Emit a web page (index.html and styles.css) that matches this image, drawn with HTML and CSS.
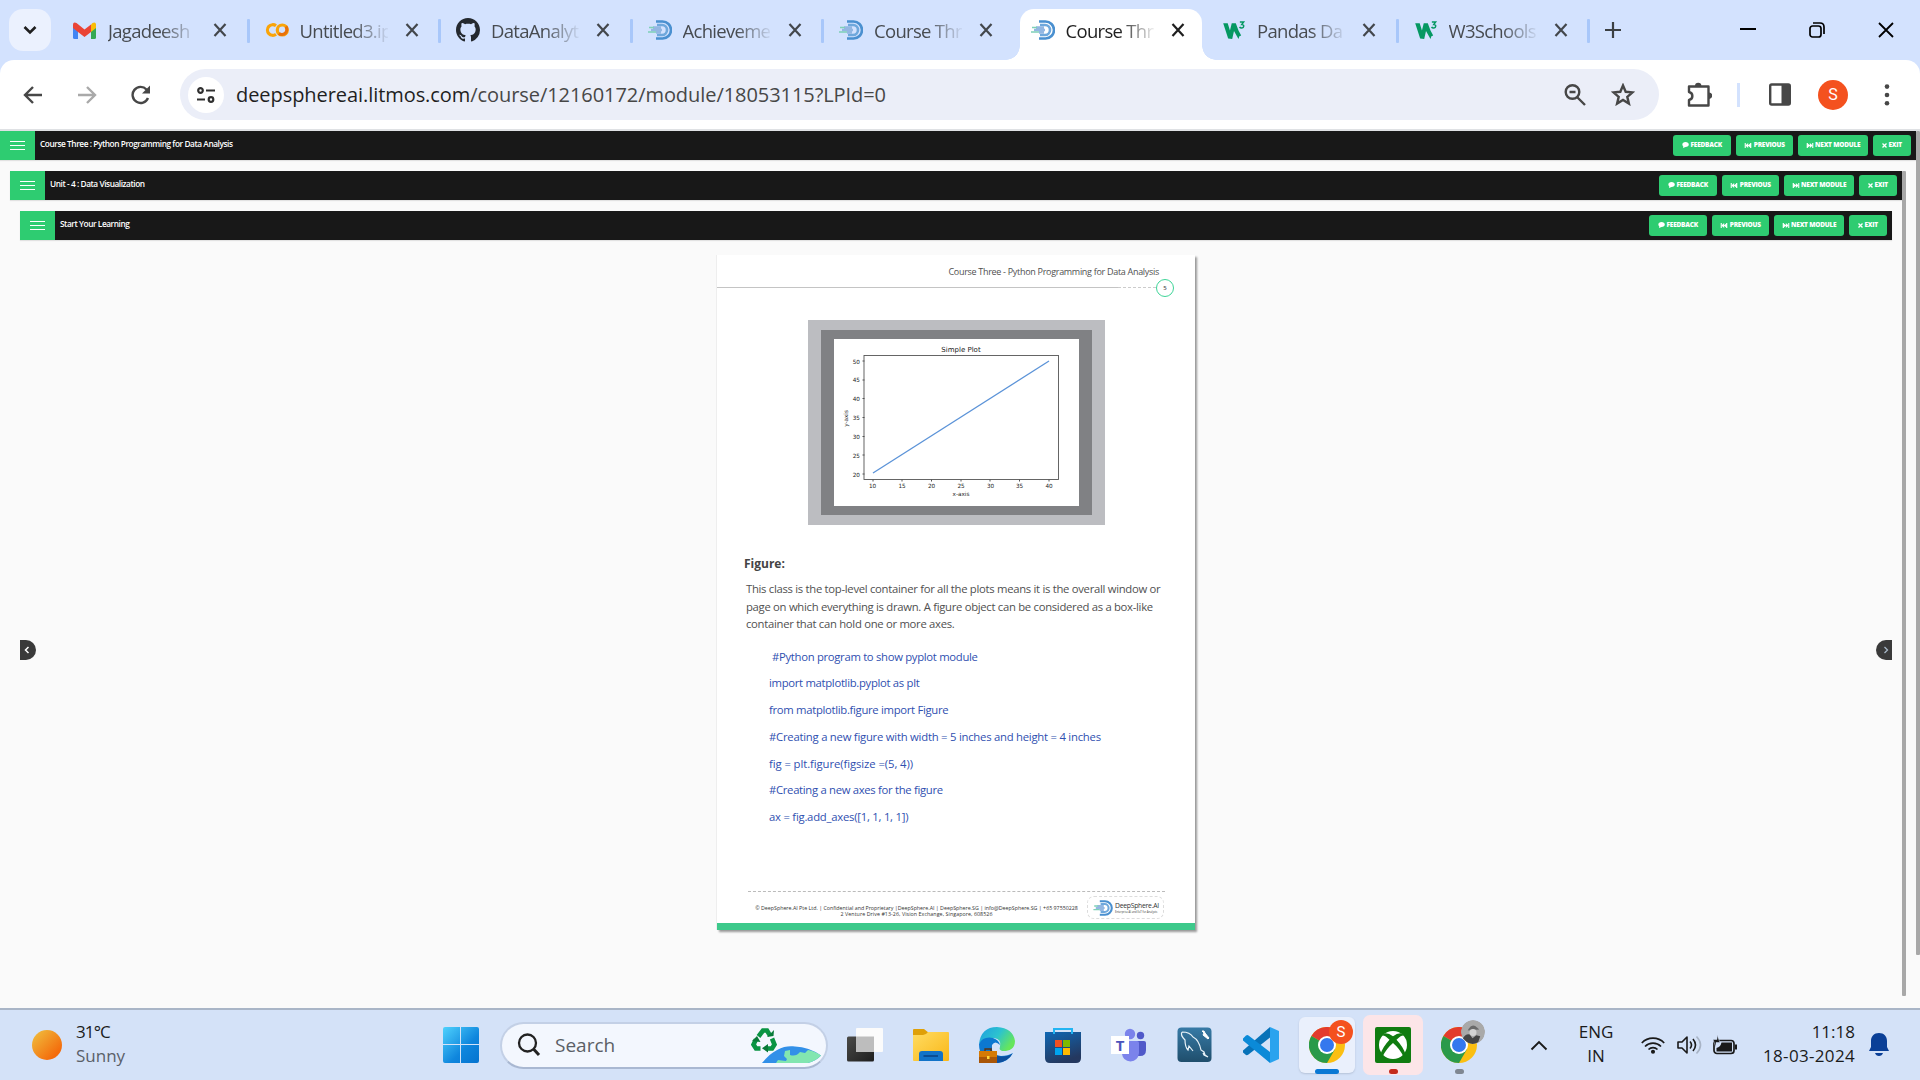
FILE: index.html
```html
<!DOCTYPE html>
<html lang="en">
<head>
<meta charset="utf-8">
<title>Course Three</title>
<link rel="stylesheet" href="styles.css">
</head>
<body>
<svg class="defs" width="0" height="0">
  <defs>
    <linearGradient id="sun" x1="0" y1="0" x2="1" y2="1"><stop offset="0.1" stop-color="#f0b83a"/><stop offset="0.8" stop-color="#f46c0c"/></linearGradient>
    <linearGradient id="win" x1="0" y1="0" x2="1" y2="1"><stop offset="0" stop-color="#4fd2fd"/><stop offset="0.6" stop-color="#0f86dd"/><stop offset="1" stop-color="#0573cf"/></linearGradient>
    <linearGradient id="fold" x1="0" y1="0" x2="1" y2="1"><stop offset="0" stop-color="#ffdc62"/><stop offset="1" stop-color="#f9b718"/></linearGradient>
    <linearGradient id="edgeTop" x1="0" y1="0" x2="1" y2="0.5"><stop offset="0" stop-color="#1e9de0"/><stop offset="0.55" stop-color="#2cc3cf"/><stop offset="1" stop-color="#66e65b"/></linearGradient>
    <linearGradient id="store" x1="0" y1="0" x2="0.4" y2="1"><stop offset="0" stop-color="#0f67b4"/><stop offset="1" stop-color="#24385f"/></linearGradient>
    <linearGradient id="sql" x1="0" y1="0" x2="0" y2="1"><stop offset="0" stop-color="#377aa6"/><stop offset="1" stop-color="#1f4e6c"/></linearGradient>
    <linearGradient id="dark" x1="0" y1="0" x2="1" y2="1"><stop offset="0" stop-color="#4a4a48"/><stop offset="1" stop-color="#1e1e1e"/></linearGradient>
  </defs>
  <symbol id="x" viewBox="0 0 14 14"><path d="M1.500 1l11 12M12.500 1l-11 12" fill="none" stroke="currentColor" stroke-width="2.200"/></symbol>
  <symbol id="ds" viewBox="0 0 24 20">
    <path d="M8 1.500h6.500a8.500 8.500 0 0 1 0 17H8" fill="none" stroke="#4a90d0" stroke-width="2.600"/>
    <path d="M9 5h5a5 5 0 0 1 0 10H9" fill="none" stroke="#6fa8dc" stroke-width="2.600"/>
    <path d="M5 7.500h8M3 10h11M8 12.500h5" stroke="#93b7e2" stroke-width="2.600"/>
    <path d="M1 7.500h5M0 12h8" stroke="#7ed0b8" stroke-width="1.600"/>
  </symbol>
  <symbol id="w3" viewBox="0 0 24 20">
    <path d="M0 2.500h5l2.500 8 2-8h4.500l3 8 3 5.500-2 1-1 3-5-9-2 9-4.500-.5z" fill="#059862"/>
    <path d="M18.500 1h4.200l-2 2.800c3 0 2.600 4.200-.2 4-1.100 0-1.900-.5-2.300-1.300" fill="none" stroke="#059862" stroke-width="1.700"/>
  </symbol>
  <symbol id="chrome" viewBox="0 0 36 36">
    <circle cx="18" cy="18" r="18" fill="#fbbf12"/>
    <path d="M18 18L2.400 9A18 18 0 0 1 33.600 9z" fill="#e33b2e"/>
    <path d="M2.400 9A18 18 0 0 0 18 36l7.800-13.500L18 18z" fill="#2a9a4a"/>
    <circle cx="18" cy="18" r="9" fill="#fff"/>
    <circle cx="18" cy="18" r="7" fill="#3478ee"/>
  </symbol>
  <symbol id="chat" viewBox="0 0 7 6"><path d="M3.500 0C5.500 0 6.800 1 6.800 2.500S5.500 5 3.500 5L1 6l.3-1.600C-.8 2.500.8 0 3.500 0z" fill="#fff"/></symbol>
  <symbol id="prev" viewBox="0 0 8 6"><path d="M.7 0v6M7.300 0v6" stroke="#fff" stroke-width="1.300"/><path d="M4.200 0v6L.8 3zM7.400 0v6L3.800 3z" fill="#fff"/></symbol>
  <symbol id="next" viewBox="0 0 8 6"><path d="M.7 0v6M7.300 0v6" stroke="#fff" stroke-width="1.300"/><path d="M.6 0v6L4.200 3zM3.800 0v6L7.200 3z" fill="#fff"/></symbol>
  <symbol id="times" viewBox="0 0 5 5"><path d="M.5.5l4 4M4.500.5l-4 4" stroke="#fff" stroke-width="1.300"/></symbol>
</svg>

<header class="tabs">
  <button class="tab-search"><svg width="14" height="10" viewBox="0 0 14 10"><path d="M1.500 2l5.500 5.500L12.500 2" fill="none" stroke="#1f1f1f" stroke-width="2.600"/></svg></button>
  <div class="tab"><span class="fav"><svg width="23" height="17" viewBox="0 0 23 17"><path d="M0 2v13.500Q0 17 1.500 17H5V6z" fill="#4285f4"/><path d="M23 2v13.500q0 1.500-1.500 1.500H18V6z" fill="#34a853"/><path d="M18 2.500l1.500-1.500Q23-.5 23 3v3l-5 4z" fill="#fbbc04"/><path d="M5 10L0 6V3Q0-.5 3.500 1L11.500 7.500 18 2.500V10l-6.500 5z" fill="#ea4335"/></svg></span><span class="name">Jagadeesh</span><svg class="x"><use href="#x"/></svg></div>
  <div class="tab"><span class="fav"><svg width="24" height="14" viewBox="0 0 24 14"><path d="M11 2.800A5.300 5.300 0 1 0 11 11.200" fill="none" stroke="#f9a409" stroke-width="3.200"/><circle cx="17.300" cy="7" r="5" fill="none" stroke="#f9a409" stroke-width="3.200"/><path d="M13.800 10.500A5 5 0 0 0 20.800 3.500" fill="none" stroke="#e8710a" stroke-width="3.200"/></svg></span><span class="name">Untitled3.ip</span><svg class="x"><use href="#x"/></svg></div>
  <div class="tab"><span class="fav"><svg width="24" height="24" viewBox="0 0 16 16"><path fill="#24292f" d="M8 0C3.580 0 0 3.580 0 8c0 3.540 2.290 6.530 5.470 7.590.4.070.55-.17.55-.38 0-.19-.01-.82-.01-1.490-2.010.37-2.530-.49-2.690-.94-.09-.23-.48-.94-.82-1.130-.28-.15-.68-.52-.01-.53.63-.01 1.080.58 1.230.82.720 1.210 1.870.87 2.330.66.070-.52.28-.87.51-1.070-1.780-.2-3.640-.89-3.640-3.950 0-.87.31-1.590.82-2.150-.08-.2-.36-1.020.08-2.120 0 0 .67-.21 2.200.82.640-.18 1.320-.27 2-.27s1.360.09 2 .27c1.530-1.040 2.200-.82 2.200-.82.440 1.100.16 1.920.08 2.120.51.560.82 1.270.82 2.150 0 3.070-1.870 3.750-3.650 3.950.29.250.54.730.54 1.480 0 1.070-.01 1.930-.01 2.200 0 .21.15.46.55.38A8.010 8.010 0 0 0 16 8c0-4.420-3.580-8-8-8z"/></svg></span><span class="name">DataAnalyt</span><svg class="x"><use href="#x"/></svg></div>
  <div class="tab"><span class="fav"><svg width="24" height="20"><use href="#ds"/></svg></span><span class="name">Achieveme</span><svg class="x"><use href="#x"/></svg></div>
  <div class="tab last"><span class="fav"><svg width="24" height="20"><use href="#ds"/></svg></span><span class="name">Course Thr</span><svg class="x"><use href="#x"/></svg></div>
  <div class="tab active"><span class="fav"><svg width="24" height="20"><use href="#ds"/></svg></span><span class="name">Course Thr</span><svg class="x"><use href="#x"/></svg></div>
  <div class="tab"><span class="fav"><svg width="24" height="18"><use href="#w3"/></svg></span><span class="name">Pandas Da</span><svg class="x"><use href="#x"/></svg></div>
  <div class="tab"><span class="fav"><svg width="24" height="18"><use href="#w3"/></svg></span><span class="name">W3Schools</span><svg class="x"><use href="#x"/></svg></div>
  <svg class="plus" width="16" height="16" viewBox="0 0 16 16"><path d="M8 0v16M0 8h16" stroke="#3c4043" stroke-width="2.200"/></svg>
  <div class="win-ctl">
    <svg width="16" height="16"><path d="M0 7h16" stroke="#000" stroke-width="2"/></svg>
    <svg width="16" height="16" viewBox="0 0 16 16"><rect x="1" y="4" width="11" height="11" rx="2.500" fill="none" stroke="#000" stroke-width="1.700"/><path d="M4 1h7q4 0 4 4v7" fill="none" stroke="#000" stroke-width="1.700"/></svg>
    <svg width="16" height="16" viewBox="0 0 16 16"><path d="M1 1l14 14M15 1L1 15" stroke="#000" stroke-width="1.800"/></svg>
  </div>
</header>

<div class="toolbar">
  <svg class="back" width="20" height="20" viewBox="0 0 20 20"><path d="M19 10H3M10 2L2 10l8 8" fill="none" stroke="#474747" stroke-width="2.400"/></svg>
  <svg class="fwd" width="20" height="20" viewBox="0 0 20 20"><path d="M1 10h16M10 2l8 8-8 8" fill="none" stroke="#a9a9a9" stroke-width="2.400"/></svg>
  <svg class="reload" width="20" height="20" viewBox="0 0 20 20"><path d="M17 13A8 8 0 1 1 15.500 4.500L18 7" fill="none" stroke="#474747" stroke-width="2.400"/><path d="M19 .5V8.500H11z" fill="#474747"/></svg>
  <div class="omnibox">
    <span class="site"><svg width="18" height="18" viewBox="0 0 18 18" fill="none" stroke="#303030" stroke-width="2.200"><circle cx="3.500" cy="4.500" r="2.300"/><path d="M9 4.500h9M0 13.500h8"/><circle cx="14" cy="13.500" r="2.300"/></svg></span>
    <span class="url"><b>deepsphereai.litmos.com</b>/course/12160172/module/18053115?LPId=0</span>
    <svg class="mag" width="22" height="22" viewBox="0 0 22 22" fill="none" stroke="#474747" stroke-width="2.400"><circle cx="8.500" cy="8" r="6.800"/><path d="M13.500 13.500l7.500 7.500M5.500 8h6"/></svg>
    <svg class="star" width="24" height="23" viewBox="0 0 24 23"><path d="M12 2.500l2.700 6.300 6.800.6-5.200 4.500 1.600 6.700L12 17l-5.900 3.600 1.600-6.700-5.200-4.500 6.800-.6z" fill="none" stroke="#474747" stroke-width="2.400"/></svg>
  </div>
  <svg class="puz" width="25" height="26" viewBox="0 0 25 26"><path d="M2 4.500h19.500v19H2v-5.500c4.500-1 4.500-7 0-8z" fill="none" stroke="#474747" stroke-width="2.400" stroke-linejoin="round"/><path d="M8 4a3.200 3.200 0 0 1 6.400 0zM22 10.500a3.200 3.200 0 0 1 0 6.400z" fill="#474747"/></svg>
  <i class="tsep"></i>
  <svg class="panel" width="22" height="23" viewBox="0 0 22 23"><rect x="1.200" y="1.500" width="19.600" height="20" rx="1.500" fill="none" stroke="#474747" stroke-width="2.400"/><path d="M12.500 2h8v19h-8z" fill="#474747"/></svg>
  <span class="avatar">S</span>
  <svg class="dots" width="6" height="22" viewBox="0 0 6 22" fill="#474747"><circle cx="3" cy="2.600" r="2.300"/><circle cx="3" cy="11" r="2.300"/><circle cx="3" cy="19.300" r="2.300"/></svg>
</div>

<main class="page">
  <section class="frame f1">
    <div class="bar"><span class="menu"><i></i><i></i><i></i></span><h1>Course Three : Python Programming for Data Analysis</h1>
      <nav><a class="b1"><svg width="7" height="6"><use href="#chat"/></svg><i>FEEDBACK</i></a><a class="b2"><svg width="8" height="5"><use href="#prev"/></svg><i>PREVIOUS</i></a><a class="b3"><svg width="8" height="5"><use href="#next"/></svg><i>NEXT MODULE</i></a><a class="b4"><svg width="5" height="5"><use href="#times"/></svg><i>EXIT</i></a></nav></div>
    <section class="frame f2">
      <div class="bar"><span class="menu"><i></i><i></i><i></i></span><h1>Unit - 4 : Data Visualization</h1>
        <nav><a class="b1"><svg width="7" height="6"><use href="#chat"/></svg><i>FEEDBACK</i></a><a class="b2"><svg width="8" height="5"><use href="#prev"/></svg><i>PREVIOUS</i></a><a class="b3"><svg width="8" height="5"><use href="#next"/></svg><i>NEXT MODULE</i></a><a class="b4"><svg width="5" height="5"><use href="#times"/></svg><i>EXIT</i></a></nav></div>
      <section class="frame f3">
        <div class="bar"><span class="menu"><i></i><i></i><i></i></span><h1>Start Your Learning</h1>
          <nav><a class="b1"><svg width="7" height="6"><use href="#chat"/></svg><i>FEEDBACK</i></a><a class="b2"><svg width="8" height="5"><use href="#prev"/></svg><i>PREVIOUS</i></a><a class="b3"><svg width="8" height="5"><use href="#next"/></svg><i>NEXT MODULE</i></a><a class="b4"><svg width="5" height="5"><use href="#times"/></svg><i>EXIT</i></a></nav></div>
        <div class="viewer">
          <span class="arrow left"><svg width="6" height="8" viewBox="0 0 6 8"><path d="M4.500 1L1.500 4l3 3" fill="none" stroke="#fff" stroke-width="1.500"/></svg></span>
          <article class="doc">
            <p class="head">Course Three - Python Programming for Data Analysis</p>
            <div class="rule"><i class="solid"></i><i class="dash"></i><span class="num">5</span></div>
            <figure class="chart"><div><svg width="245" height="167" viewBox="834 339 245 167">
              <rect x="864" y="355.500" width="194.500" height="124" fill="none" stroke="#555" stroke-width="0.900"/>
              <path d="M873 473L1049 361" stroke="#5b93d8" stroke-width="1.300"/>
              <path d="M862.500 361h2M862.500 380h2M862.500 398.500h2M862.500 417.500h2M862.500 436.500h2M862.500 455h2M862.500 474h2M873 479.500v2M902 479.500v2M931.500 479.500v2M961 479.500v2M990 479.500v2M1019.500 479.500v2M1049 479.500v2" stroke="#555"/>
              <g class="ctitle"><text x="961" y="352" text-anchor="middle">Simple Plot</text></g>
              <g class="ticks" text-anchor="end"><text x="860" y="363.500">50</text><text x="860" y="382.200">45</text><text x="860" y="401">40</text><text x="860" y="420">35</text><text x="860" y="438.800">30</text><text x="860" y="457.500">25</text><text x="860" y="476.500">20</text></g>
              <g class="ticks" text-anchor="middle"><text x="872.500" y="488">10</text><text x="902" y="488">15</text><text x="931.500" y="488">20</text><text x="961" y="488">25</text><text x="990.500" y="488">30</text><text x="1019.500" y="488">35</text><text x="1049" y="488">40</text><text x="961" y="496.300">x-axis</text><text transform="translate(848 418.500) rotate(-90)">y-axis</text></g>
            </svg></div></figure>
            <h2>Figure:</h2>
            <p class="para">This class is the top-level container for all the plots means it is the overall window or<br>page on which everything is drawn. A figure object can be considered as a box-like<br>container that can hold one or more axes.</p>
            <div class="code">
              <p class="in">#Python program to show pyplot module</p>
              <p>import matplotlib.pyplot as plt</p>
              <p>from matplotlib.figure import Figure</p>
              <p class="wide">#Creating a new figure with width = 5 inches and height = 4 inches</p>
              <p class="wider">fig = plt.figure(figsize =(5, 4))</p>
              <p>#Creating a new axes for the figure</p>
              <p class="wide">ax = fig.add_axes([1, 1, 1, 1])</p>
            </div>
            <footer class="dfoot">
              <p>© DeepSphere.AI Pte Ltd. | Confidential and Proprietary |DeepSphere.AI | DeepSphere.SG | info@DeepSphere.SG | +65 97550228<br><span>2 Venture Drive #13-26, Vision Exchange, Singapore, 608526</span></p>
              <div class="logo"><svg width="22" height="16"><use href="#ds"/></svg><div><b>DeepSphere.AI</b><small>Enterprise AI and IIoT for Analysts</small></div></div>
            </footer>
          </article>
          <span class="arrow right"><svg width="6" height="8" viewBox="0 0 6 8"><path d="M1.500 1L4.500 4l-3 3" fill="none" stroke="#a8b8c8" stroke-width="1.300"/></svg></span>
        </div>
      </section>
      <i class="thumb t2"></i>
    </section>
    <i class="thumb t1"></i>
  </section>
</main>

<footer class="taskbar">
  <div class="weather"><svg width="30" height="30"><circle cx="15" cy="15" r="15" fill="url(#sun)"/></svg><p><span>31°C</span><br><em>Sunny</em></p></div>
  <svg class="start" width="36" height="36" viewBox="0 0 36 36" fill="url(#win)"><path d="M2 0h15v17H0V2q0-2 2-2zM18 0h16q2 0 2 2v15H18zM0 18h17v18H2q-2 0-2-2zM18 18h18v16q0 2-2 2H18z"/></svg>
  <div class="search">
    <svg class="lens" width="24" height="24" viewBox="0 0 24 24"><circle cx="10.500" cy="10" r="8.500" fill="none" stroke="#222" stroke-width="2.300"/><path d="M16.500 16l5.500 6" stroke="#222" stroke-width="3"/></svg>
    <span>Search</span>
    <svg class="eco" width="74" height="38" viewBox="748 1027 74 38">
      <path d="M762 1064C774 1049 786 1046 795 1047.500Q809 1048 821 1056.500Q816 1062 808 1064z" fill="#3290e8"/><path d="M776 1064l2-3 8 1 1-2-3-3 1-5 5-1v5q6 2 10-3l5 1 3-3Q815 1052 821 1056.500 816 1062 808 1064z" fill="#82e6b0"/>
      <g fill="none" stroke="#0a9443" stroke-width="4.600"><path d="M758.500 1037.500l4.500-6h4l3 5"/><path d="M772 1039.500l2.500 6-2.500 4h-6"/><path d="M760.500 1049.500h-4.500l-2.500-4 2.500-5"/></g>
      <path d="M767 1038l6.500-1 .5-6zM768 1045v8.500l-6-4.200zM752 1042l5-5 3.500 6z" fill="#087a38"/>
    </svg>
  </div>
  <div class="apps">
    <span class="app"><svg width="36" height="36" viewBox="0 0 36 36"><rect y="9.500" width="27" height="25" rx="1.500" fill="url(#dark)"/><rect x="9" y="1" width="27" height="24" rx="1" fill="#fbfbfb"/><path d="M9 9.500h18V25H9z" fill="#bdbdbd"/></svg></span>
    <span class="app"><svg width="36" height="36" viewBox="0 0 36 36"><path d="M0 3q0-1 1-1h10l5 4v6H0z" fill="#dfa008"/><path d="M0 8h10q3 0 5-3h20q1 0 1 1v27q0 1-1 1H1q-1 0-1-1z" fill="url(#fold)"/><path d="M6 34v-7q0-3 3-3h18q3 0 3 3v7z" fill="#1273c8"/><path d="M10.500 29h14.500" stroke="#0a4d94" stroke-width="2"/></svg></span>
    <span class="app"><svg width="36" height="36" viewBox="0 0 36 36"><path d="M0 17Q2 0 18 0q16 1 18 14c0 8-6 10-11 10-4 0-5-2-4-4Q23 12 15 11 5 10 0 17z" fill="url(#edgeTop)"/><path d="M0 17q4-8 14-6 6 2 7 7-5-5-8 0-2 10 9 11 7 0 12-3-5 9-15 10Q0 35 0 17z" fill="#0c78d0"/><path d="M13 18q-2 11 10 11.500 7 0 10.500-3Q29 35 18 36 8 31 13 18z" fill="#0d4f9e"/><path d="M0 24h18v12H0z" fill="#d57a05"/><path d="M0 30h18v6H0z" fill="#a95608"/><path d="M6 24v-2h6v2" fill="none" stroke="#5a3210" stroke-width="1.300"/><path d="M8 29h2.500v3H8z" fill="#ffd83a"/></svg></span>
    <span class="app"><svg width="36" height="36" viewBox="0 0 36 36"><path d="M0 5h36v26q0 5-5 5H5q-5 0-5-5z" fill="url(#store)"/><path d="M9 7V2h18v5" fill="none" stroke="#22b4f2" stroke-width="2"/><path d="M10 13h7v7h-7z" fill="#f25022"/><path d="M18 13h7v7h-7z" fill="#7fba00"/><path d="M10 21h7v7h-7z" fill="#00a4ef"/><path d="M18 21h7v7h-7z" fill="#ffb900"/></svg></span>
    <span class="app"><svg width="36" height="36" viewBox="0 0 36 36"><circle cx="29.500" cy="8.500" r="3.700" fill="#5059c9"/><path d="M24 14h9q2 0 2 2v7q0 6-6 6h-5z" fill="#5059c9"/><circle cx="19" cy="7" r="5.200" fill="#7b83eb"/><path d="M11 14h15q2 0 2 2v10q-1 8-8.500 8.500Q12 34 11 27z" fill="#7b83eb"/><rect y="9" width="18" height="18" fill="#fff"/><text class="teams" x="9" y="23.500" text-anchor="middle">T</text></svg></span>
    <span class="app"><svg width="36" height="36" viewBox="0 0 36 36"><rect x=".5" y=".5" width="34" height="34.500" rx="4" fill="url(#sql)"/><path d="M5 5q8 0 11 5 6 3 8 13l3 2 1 3 3 2M5 5q-2 3 3 8 0 7 3 10l1-4 4 5M26 26l1 2 4 2" fill="none" stroke="#e8f2f8" stroke-width="1.200"/><path d="M25 4l2 2-1 2 5 4 1-1-4-5-1-2z" stroke="#fff" fill="#fff"/></svg></span>
    <span class="app"><svg width="36" height="36" viewBox="0 0 36 36"><path d="M27 0L0 23.500v2L3 28q1 .5 2.500-.5L27 10.500z" fill="#0872b8"/><path d="M0 11.500l3-3q1.500-.8 2.500 0L27 25v11L0 13.500z" fill="#0b8ad8"/><path d="M27 0l9 4v28l-9 4z" fill="#29a3ee"/></svg></span>
    <span class="app on"><svg width="36" height="36"><use href="#chrome"/></svg><b class="badge">S</b><u></u></span>
    <span class="app alert"><svg width="36" height="36" viewBox="0 0 36 36"><rect width="36" height="36" rx="2" fill="#107c10"/><circle cx="18" cy="18" r="14" fill="#fff"/><path d="M9 6.500q4-1 9 2.800 5-3.800 9-2.800l2 2q-3-.5-7.500 4.300 7 7.500 9 14.500l-2 2.500Q25 22 18 16 11 22 7.500 29.800l-2-2.500q2-7 9-14.500Q10 8 7 8.500z" fill="#107c10"/></svg><u></u></span>
    <span class="app idle"><svg width="36" height="36"><use href="#chrome"/></svg><svg class="badge photo" width="25" height="25" viewBox="0 0 25 25"><circle cx="12.500" cy="12.500" r="12.500" fill="#a9a9a9"/><path d="M8 9q4-6 9-1l2 2-12 1z" fill="#6a6a6a"/><circle cx="12.500" cy="13" r="3.600" fill="#d4d4d4"/><path d="M2 19q3-5 7-4l3 4 4-3 4 1-2 6q-6 4-12 0z" fill="#454545"/></svg><u></u></span>
  </div>
  <svg class="up" width="18" height="11" viewBox="0 0 18 11"><path d="M1.500 9.500L9 2l7.500 7.500" fill="none" stroke="#1a1a1a" stroke-width="1.900"/></svg>
  <p class="lang"><span>ENG</span><br><span>IN</span></p>
  <svg class="wifi" width="24" height="18" viewBox="0 0 24 18" fill="none" stroke="#1a1a1a" stroke-width="1.700"><path d="M.8 7a15.500 15.500 0 0 1 22.400 0M4 10.500a11.300 11.300 0 0 1 16 0M7.500 13.500a6.500 6.500 0 0 1 9 0"/><circle cx="12" cy="15.800" r="1.200" fill="#1a1a1a"/></svg>
  <svg class="vol" width="25" height="20" viewBox="0 0 25 20" fill="none" stroke="#1a1a1a" stroke-width="1.600"><path d="M1 7h4l5-5v16l-5-5H1z" stroke-linejoin="round"/><path d="M13 6.500q3 3.500 0 7M16 4q5 6 0 12"/><path d="M19.500 1.500q8 8.500 0 17" stroke="#a8b4c6"/></svg>
  <svg class="bat" width="25" height="20" viewBox="0 0 25 20"><rect x="1" y="5.500" width="20" height="13" rx="3" fill="none" stroke="#1a1a1a" stroke-width="1.700"/><path d="M3.500 13q4-1 5-5.500H19v9H3.500zM22 9.500h2v5h-2z" fill="#1a1a1a"/><path d="M4 0v4.500H0L3 12V7.500h4z" fill="#1a1a1a" stroke="#d4e2f8" stroke-width=".5"/></svg>
  <p class="clock"><span>11:18</span><br><span class="date">18-03-2024</span></p>
  <svg class="bell" width="20" height="24" viewBox="0 0 20 24"><path d="M10 0c5 0 8 3.500 8 8v6l2 4H0l2-4V8c0-4.500 3-8 8-8zM6 20h8q-1 3-4 3t-4-3z" fill="#0a3f97"/></svg>
</footer>
</body>
</html>
```
FILE: styles.css
```css
* { box-sizing: border-box; }
body { margin: 0; width: 1920px; height: 1080px; overflow: hidden; display: flex; flex-direction: column; background: #d3e2fe; font-family: "Open Sans", "Noto Sans", sans-serif; }
p, h1, h2, figure { margin: 0; font-weight: 400; }
i, em { font-style: normal; }
svg { display: block; flex: none; }
.defs { position: absolute; }

/* tab strip */
.tabs { height: 60px; flex: none; display: flex; align-items: center; background: #d3e2fe; padding-left: 9px; color: #474b50; font-size: 19px; }
.tab-search { width: 42px; height: 42px; margin-right: 6px; padding: 0; border: 0; border-radius: 14px; background: #ebf1fe; display: flex; align-items: center; justify-content: center; flex: none; }
.tab { position: relative; width: 191.500px; height: 60px; flex: none; display: flex; align-items: center; padding-left: 16px; }
.tab:not(.last):not(.active)::after { content: ""; position: absolute; right: -1px; top: 19px; width: 3px; height: 24px; background: #a8c7fa; border-radius: 1px; }
.fav { width: 24px; height: 60px; display: flex; align-items: center; margin-right: 11px; }
.name { width: 88px; white-space: nowrap; font-size: 18.500px; letter-spacing: -0.700px; line-height: 30px; padding-top: 2px; margin-right: 17px; -webkit-mask-image: linear-gradient(90deg, #000 60%, transparent 103%); mask-image: linear-gradient(90deg, #000 60%, transparent 103%); }
.x { width: 14px; height: 14px; color: #43474c; }
.tab.active { z-index: 1; color: #1f1f1f; }
.tab.active .x { color: #1f1f1f; }
.tab.active::before { content: ""; position: absolute; z-index: -1; left: 5px; top: 9px; width: 182px; height: 51px; background: #fff; border-radius: 14px 14px 0 0; }
.tab.active::after { content: ""; position: absolute; z-index: -1; left: -9px; bottom: 0; width: 210px; height: 14px; background: radial-gradient(circle at 0 0, transparent 13.500px, #fff 14px) left / 14px 14px no-repeat, radial-gradient(circle at 100% 0, transparent 13.500px, #fff 14px) right / 14px 14px no-repeat; }
.plus { margin-left: 16px; }
.win-ctl { display: flex; gap: 53px; margin-left: 119px; }

/* toolbar */
.toolbar { height: 71px; flex: none; display: flex; align-items: center; background: #fff; border-radius: 14px 14px 0 0; border-bottom: 2px solid #dfe1e4; padding-left: 23px; }
.fwd { margin-left: 34px; }
.reload { margin-left: 34px; }
.omnibox { width: 1479px; height: 51px; margin-left: 29px; border-radius: 26px; background: #ebeef8; display: flex; align-items: center; padding-left: 8px; }
.site { width: 36px; height: 36px; border-radius: 50%; background: #fff; display: flex; align-items: center; justify-content: center; margin-right: 12px; }
.url { width: 1328px; font-size: 20px; letter-spacing: -0.064px; line-height: 30px; color: #474747; white-space: nowrap; }
.url b { font-weight: 400; color: #1f1f1f; }
.star { margin-left: 25px; }
.puz { margin-left: 28px; }
.tsep { width: 3px; height: 24px; background: #d3e2fe; margin-left: 25px; }
.panel { margin-left: 29px; }
.avatar { width: 30px; height: 30px; margin-left: 27px; border-radius: 50%; background: #f4511e; color: #fff; font: 16px/30px Roboto, sans-serif; text-align: center; }
.dots { margin-left: 36px; }

/* nested course frames */
.page { height: 877px; flex: none; background: #fafafa; }
.frame { position: relative; }
.f2 { margin: 11px 0 0 10px; width: 1892px; }
.f3 { margin: 11px 0 0 10px; width: 1872px; }
.f1 { width: 1916px; }
.bar { height: 29px; background: #181818; display: flex; align-items: center; box-shadow: 0 1px 1px #e2e2e2; }
.menu { width: 35px; height: 29px; background: #2ecc71; display: flex; flex-direction: column; align-items: center; justify-content: center; gap: 3px; }
.menu i { width: 15px; height: 1px; background: #fff; }
.bar h1 { margin-left: 5px; flex: 1; color: #fff; font-size: 8.300px; letter-spacing: -0.440px; font-weight: 600; line-height: 16px; padding-bottom: 3px; white-space: nowrap; }
.bar nav { display: flex; gap: 5px; margin-right: 5px; }
.bar a { height: 21px; border-radius: 3px; background: #2ecc71; color: #fff; display: flex; align-items: center; justify-content: center; gap: 1.500px; padding-bottom: 1px; font-size: 6.500px; letter-spacing: -0.220px; font-weight: 800; line-height: 10px; white-space: nowrap; }
.b1 { width: 58px; } .b2 { width: 57px; } .b3 { width: 70px; } .b4 { width: 38px; }
.thumb { position: absolute; width: 4px; background: #a8a8a8; right: -4px; top: 0; border-radius: 1px; }
.t1 { height: 824px; } .t2 { height: 825px; }

/* document viewer */
.viewer { display: flex; justify-content: space-between; height: 768px; overflow: hidden; }
.arrow { width: 16px; height: 20px; margin-top: 400px; background: #3a3a3a; display: flex; align-items: center; }
.arrow.left { border-radius: 0 10px 10px 0; padding-left: 4px; }
.arrow.right { border-radius: 10px 0 0 10px; padding-left: 7px; }
.doc { width: 478px; height: 675px; margin-top: 15px; background: #fff; box-shadow: 2px 2px 2px #999, -1px 0 0 #eee; display: flex; flex-direction: column; color: #505050; }
.head { margin: 10px 36px 0 auto; font-size: 9px; letter-spacing: -0.300px; line-height: 14px; white-space: nowrap; }
.rule { height: 17px; display: flex; align-items: center; flex: none; }
.solid { width: 401px; height: 1px; background: #c4c4c4; }
.dash { width: 38px; border-top: 1px dashed #ccc; }
.num { width: 18px; height: 18px; border-radius: 50%; border: 1px solid #3ed598; font-size: 6px; line-height: 16px; text-align: center; font-weight: 600; }
.chart { width: 297px; height: 205px; flex: none; margin: 24px 0 0 91px; background: #bcbdc1; padding: 10px 13px; }
.chart div { width: 271px; height: 185px; background: #808184; padding: 9px 13px; }
.chart svg { background: #fff; }
.ctitle { font: 7px "DejaVu Sans", sans-serif; fill: #222; }
.ticks { font: 5.700px "DejaVu Sans", sans-serif; fill: #222; }
.doc h2 { margin: 29px 0 0 27px; font-size: 12px; font-weight: 700; line-height: 20px; color: #444; }
.para { margin: 6px 0 0 29px; font-size: 11.300px; letter-spacing: -0.297px; line-height: 17.600px; white-space: nowrap; }
.code { margin: 11px 0 0 52px; color: #2f4fb0; font-size: 11.300px; letter-spacing: -0.310px; line-height: 26.700px; white-space: nowrap; }
.code .in { padding-left: 3px; }
.code .wide { letter-spacing: -0.240px; }
.code .wider { letter-spacing: -0.082px; }
.dfoot { margin: auto 30px 0 31px; height: 32px; border-top: 1px dashed #bbb; display: flex; justify-content: space-between; font: 5.300px/6.200px "Open Sans", sans-serif; white-space: nowrap; color: #333; }
.dfoot p { margin: 12.500px 0 0 7px; text-align: center; width: 323px; }
.dfoot span { letter-spacing: 0.068px; }
.logo { width: 77px; height: 23px; margin-top: 4px; margin-right: 1px; border: 1px dashed #dcdcdc; border-radius: 7px; display: flex; align-items: center; padding-left: 4px; gap: 1px; }
.logo b { display: block; font: 6.800px/8px "Open Sans", sans-serif; letter-spacing: -0.250px; }
.logo small { display: block; font: 2.700px/4px "Open Sans", sans-serif; }
.doc::after { content: ""; height: 7px; flex: none; background: #3dc98b; }

/* taskbar */
.taskbar { height: 72px; flex: none; display: flex; align-items: center; background: #d4e2f8; border-top: 2px solid #a9b5c7; color: #1b1b1b; font-size: 17px; line-height: 24px; }
.taskbar p { padding-bottom: 2px; }
.weather { width: 411px; margin-left: 32px; display: flex; align-items: center; gap: 14px; }
.weather span { letter-spacing: -0.900px; }
.weather em { color: #5a6068; }
.search { width: 328px; height: 47px; margin-left: 21px; border: 2px solid #c3d0e6; border-bottom-color: #a9b8d2; border-radius: 24px; background: #f3f7fe; display: flex; align-items: center; padding-left: 15px; font-size: 19px; color: #5b5f66; overflow: hidden; }
.search span { width: 193px; margin-left: 14px; padding-bottom: 1px; }
.apps { display: flex; margin-left: 7px; }
.app { position: relative; width: 60px; height: 60px; margin-right: 6px; border-radius: 7px; display: flex; align-items: center; justify-content: center; }
.teams { font: 700 15px "Open Sans", sans-serif; fill: #4b53bc; }
.on::before { content: ""; position: absolute; inset: 2px; border-radius: 6px; background: #eaf0fc; box-shadow: 0 1px 2px #b5c2d8; }
.on svg { position: relative; }
.app.alert { background: #fce5e8; }
.app .badge { position: absolute; left: 32px; top: 5px; width: 24px; height: 24px; border-radius: 50%; background: #f4511e; color: #fff; font: 15px/24px Roboto, sans-serif; text-align: center; }
.app .photo { background: none; }
.app u { position: absolute; bottom: 1px; left: 25.500px; width: 9px; height: 5px; border-radius: 3px; background: #c42b1c; }
.on u { left: 18px; width: 24px; background: #0a78d4; }
.idle u { background: #7f8792; }
.up { margin-left: 35px; }
.lang { width: 60px; margin-left: 18px; text-align: center; }
.wifi { margin-left: 15px; }
.vol { margin-left: 12px; }
.bat { margin-left: 11px; }
.clock { width: 117px; text-align: right; }
.date { letter-spacing: 0.330px; }
.bell { margin-left: 14px; }
```
